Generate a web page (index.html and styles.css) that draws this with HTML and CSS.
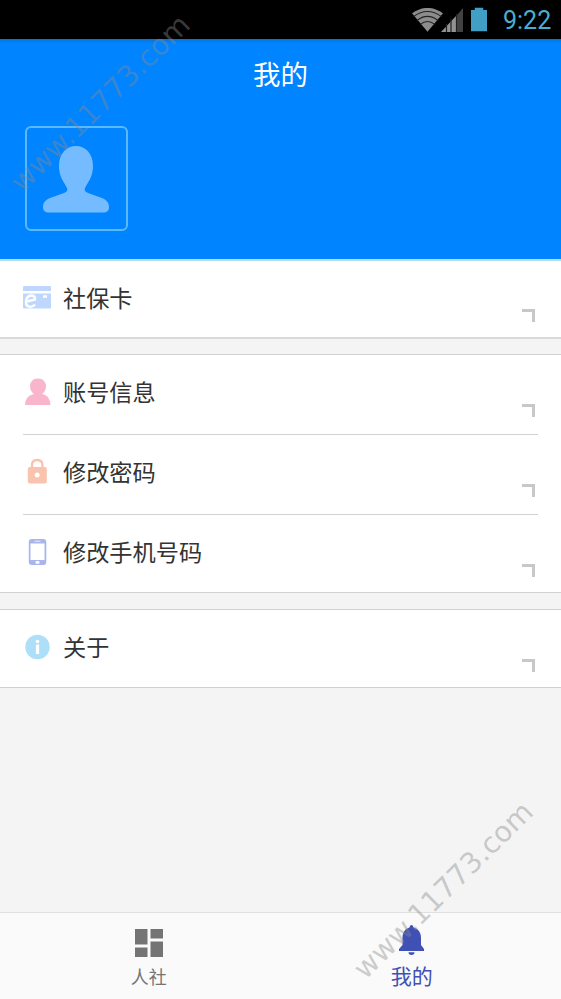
FILE: index.html
```html
<!DOCTYPE html>
<html lang="zh-CN">
<head>
<meta charset="utf-8">
<title>我的</title>
<link rel="stylesheet" href="styles.css">
</head>
<body>
<div class="app">
  <header class="status">
    <svg class="wifi" width="31" height="24" viewBox="0 0 32 24">
      <path d="M0 5Q16-6 32 5L16 24Z" fill="#8c8c8c"/>
      <path d="M1.5 8.5Q16-2 30.500 8.500M5 12.500Q16 4 27 12.500M8.500 16.500Q16 10.500 23.500 16.500" fill="none" stroke="#222" stroke-width="1.100"/>
    </svg>
    <svg class="signal" width="22" height="24" viewBox="0 0 22 24">
      <path d="M0 24L15 8V24Z" fill="#929292"/><path d="M16 7L22 0V24H16Z" fill="#424242"/>
      <path d="M5.500 16V24M10 11V24M15.500 6V24" stroke="#222" stroke-width="1.200"/>
    </svg>
    <svg class="battery" width="16" height="25" viewBox="0 0 17 25"><path d="M0 2.500H4V0H13V2.500H17V25H0Z" fill="#409fc2"/></svg>
    <span class="clock">9:22</span>
  </header>
  <section class="hero">
    <h1>我的</h1>
    <div class="avatar">
      <svg width="66" height="67" viewBox="0 0 66 67"><path d="M33 0C43 0 50 8 50 20C50 31 45 36 42 42C41 45 43 46 45 47L59 52C64 54 66 57 66 61C66 65 64 66.500 60 66.500H6C2 66.500 0 65 0 61C0 57 2 54 7 52L21 47C24 46 25 44 24 42C21 36 16 31 16 20C16 8 23 0 33 0Z" fill="#74bcff"/></svg>
    </div>
  </section>
  <main>
    <section class="group first">
      <div class="row">
        <svg class="icon" width="28" height="23" viewBox="0 0 28 23"><path d="M1 0H27Q28 0 28 1V5H0V1Q0 0 1 0ZM0 7.500H28V21.500Q28 22.500 27 22.500H1Q0 22.500 0 21.500Z" fill="#bfd7fd"/><path d="M3.500 15.500L12 13.500C13 8 4 8 3 15C2.500 22 9 22 12 18.500M20 10.500H24" fill="none" stroke="#fff" stroke-width="2.400"/></svg>
        <span class="label">社保卡</span><i class="arrow"></i>
      </div>
    </section>
    <section class="group account">
      <div class="row">
        <svg class="icon" width="28" height="28" viewBox="0 0 28 28"><path d="M15 0.500C20 0.500 23 4 23 8.500C23 12 21 14.500 19 16C24 17 27 20 27.500 27H2C2.500 20 6 17 11 16C9 14.500 7 12 7 8.500C7 4 10 0.500 15 0.500Z" fill="#f9b5cb"/></svg>
        <span class="label">账号信息</span><i class="arrow"></i>
      </div>
      <div class="row">
        <svg class="icon" width="28" height="28" viewBox="0 0 28 28"><path d="M9 10V7Q9 2 14.200 2T19.500 7V10" fill="none" stroke="#f9c3ad" stroke-width="2.300"/><rect x="4.800" y="9" width="19" height="16.500" rx="2" fill="#f9c3ad"/><circle cx="14.200" cy="17" r="2.500" fill="#fff"/></svg>
        <span class="label">修改密码</span><i class="arrow"></i>
      </div>
      <div class="row">
        <svg class="icon" width="28" height="28" viewBox="0 0 28 28"><rect x="5.800" y="1" width="17.500" height="26" rx="3" fill="#a9b6ec"/><rect x="7.500" y="5.500" width="14" height="16.500" fill="#fff"/><path d="M11.500 3.200H17.500" stroke="#e7ebff"/><rect x="12.500" y="23" width="4" height="2.700" rx="1" fill="#fff"/></svg>
        <span class="label">修改手机号码</span><i class="arrow"></i>
      </div>
    </section>
    <section class="group">
      <div class="row">
        <svg class="icon" width="28" height="28" viewBox="0 0 28 28"><circle cx="14.500" cy="14" r="12.200" fill="#ade0f8"/><circle cx="14.500" cy="8.500" r="1.800" fill="#fff"/><path d="M14.500 11.500V21" stroke="#fff" stroke-width="3.200"/></svg>
        <span class="label">关于</span><i class="arrow"></i>
      </div>
    </section>
  </main>
  <nav>
    <div class="tab">
      <svg width="28" height="28" viewBox="0 0 28 28"><path d="M0 0H12.500V15.500H0ZM15.500 0H28V9.500H15.500ZM0 18.500H12.500V28H0ZM15.500 12.500H28V28H15.500Z" fill="#747474"/></svg>
      <span>人社</span>
    </div>
    <div class="tab active">
      <svg width="26" height="30" viewBox="0 0 26 30"><path d="M10.500 2.500Q10.500 0 12.500 0T14.500 2.500C20 4 22 8 22 13V20L25 24V26H0V24L3.500 20V13C3.500 8 5.500 4 10.500 2.500ZM9.500 27.300H15.500Q15.500 30 12.500 30T9.500 27.300Z" fill="#3f51b5"/></svg>
      <span>我的</span>
    </div>
  </nav>
  <div class="mark mark-top">www.11773.com</div>
  <div class="mark mark-bottom">www.11773.com</div>
</div>
</body>
</html>
```
FILE: styles.css
```css
* { box-sizing: border-box; }
body { margin: 0; font-family: "Noto Sans CJK SC", sans-serif; }
.app {
  position: relative;
  display: flex;
  flex-direction: column;
  width: 561px;
  height: 999px;
  overflow: hidden;
  background: #f4f4f4;
}
.status {
  display: flex;
  justify-content: flex-end;
  align-items: flex-start;
  height: 39px;
  padding: 7px 9px 0 0;
  background: #000;
}
.status svg { flex: none; }
.wifi { margin-top: 1px; }
.signal { margin: 1px 8px 0 -2px; }
.battery { margin-right: 16px; }
.clock {
  width: 49px;
  color: #4aaed2;
  font: 25px/27px Roboto, sans-serif;
  white-space: nowrap;
}
.hero {
  height: 220px;
  background: linear-gradient(#0774d8, #0084ff 4px);
  color: #fff;
}
h1 {
  margin: 0;
  padding-top: 14px;
  height: 87px;
  font-size: 27.500px;
  line-height: 40px;
  font-weight: 400;
  text-align: center;
}
.avatar {
  display: flex;
  justify-content: center;
  width: 103px;
  height: 105px;
  margin-left: 25px;
  padding: 18px 1px 0 0;
  border: 2px solid #5abaff;
  border-radius: 6px;
}
.group {
  margin-bottom: 16px;
  border-top: 1px solid #d1d1d1;
  border-bottom: 1px solid #d1d1d1;
  background: #fff;
}
.group.first { border-top: 2px solid #b9ddff; border-bottom: 2px solid #dadada; margin-bottom: 15px; }
.row {
  display: flex;
  align-items: center;
  height: 77px;
  margin: 0 23px;
  padding-bottom: 3px;
  color: #333;
  font-size: 23.200px;
}
.first .row { height: 76px; }
.account .row:not(:last-child) { height: 80px; border-bottom: 1px solid #d2d2d2; padding-bottom: 6px; }
.account .row:last-child { height: 77px; padding-bottom: 4px; }
.icon { margin-right: 12px; flex: none; }
.label { flex: 1; height: 34px; line-height: 32px; }
.arrow {
  width: 13px;
  height: 13px;
  margin: 36px 3px 0 0;
  border: solid #c8c8c8;
  border-width: 3px 3px 0 0;
}
.account .arrow { margin-top: 37px; }
nav {
  display: flex;
  height: 87px;
  margin-top: auto;
  padding: 0 17px;
  border-top: 1px solid #e0e0e0;
  background: #fafafa;
}
.tab {
  flex: 1;
  display: flex;
  flex-direction: column;
  align-items: center;
  padding-top: 16px;
  color: #747474;
  font-size: 18px;
  line-height: 26px;
}
.tab span { margin-top: 6px; }
.tab.active { padding-top: 12px; color: #3f51b5; font-size: 21px; line-height: 30px; }
.tab.active span { margin: 5px 1px 0 0; }
.mark {
  position: absolute;
  width: 244px;
  height: 34px;
  font: 28.600px/34px "DejaVu Sans", sans-serif;
  text-align: center;
  transform: rotate(-44.5deg);
  color: rgba(138, 138, 138, .42);
  white-space: nowrap;
}
.mark-top { left: -22px; top: 86px; }
.mark-bottom { left: 321px; top: 873px; }
```
